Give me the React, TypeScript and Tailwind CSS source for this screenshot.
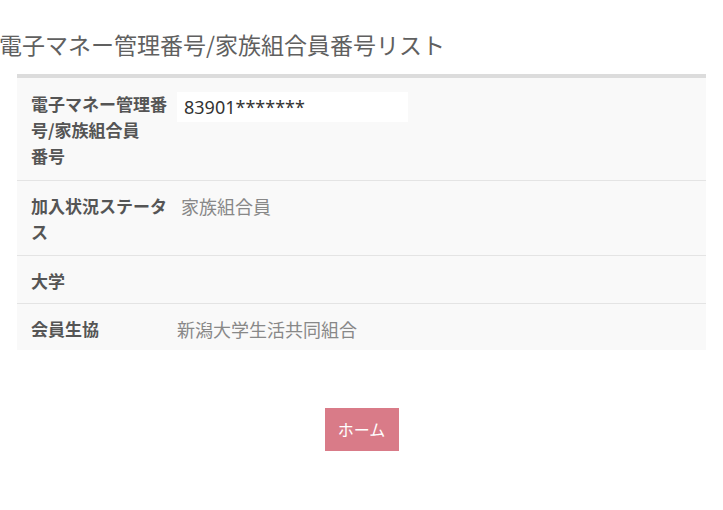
import React from "react";

const font = { fontFamily: '"Noto Sans CJK JP", "Noto Sans", sans-serif' };

export default function App() {
  return (
    <div className="min-h-[510px] w-full bg-white" style={font}>
      <div className="pt-[28px]">
        <h1 className="text-[23px] leading-[32px] font-normal text-[#606060] ml-[-1px] whitespace-nowrap">
          電子マネー管理番号/家族組合員番号リスト
        </h1>
      </div>
      <div className="mx-[17px] mt-[14px] border-t-4 border-[#dcdcdc] bg-[#f9f9f9]">
        <div className="grid grid-cols-[160px_1fr]">
          <div className="pl-[14px] pr-[8px] pt-[13px] pb-[11px] text-[17px] leading-[26px] font-bold text-[#555]">
            電子マネー管理番
            <br />
            号/家族組合員
            <br />
            番号
          </div>
          <div className="pt-[14px]">
            <div
              className="w-[231px] h-[30px] bg-white pl-[7px] text-[18px] leading-[30px] text-[#333]"
              style={{ fontFamily: '"Noto Sans", "Noto Sans CJK JP", sans-serif' }}
            >
              83901*******
            </div>
          </div>
        </div>
        <div className="grid grid-cols-[160px_1fr] border-t border-[#e4e4e4]">
          <div className="pl-[14px] pr-[8px] pt-[12px] pb-[10px] text-[17px] leading-[26px] font-bold text-[#555]">
            加入状況ステータ
            <br />ス
          </div>
          <div className="pl-[4px] pt-[12px] text-[18px] leading-[26px] text-[#888]">家族組合員</div>
        </div>
        <div className="grid grid-cols-[160px_1fr] border-t border-[#e4e4e4]">
          <div className="pl-[14px] pr-[8px] pt-[12px] pb-[9px] text-[17px] leading-[26px] font-bold text-[#555]">
            大学
          </div>
          <div className="pt-[12px] text-[18px] leading-[26px] text-[#888]"></div>
        </div>
        <div className="grid grid-cols-[160px_1fr] border-t border-[#e4e4e4]">
          <div className="pl-[14px] pr-[8px] pt-[12px] pb-[8px] text-[17px] leading-[26px] font-bold text-[#555]">
            会員生協
          </div>
          <div className="pt-[12px] text-[18px] leading-[26px] text-[#888]">新潟大学生活共同組合</div>
        </div>
      </div>
      <div className="flex justify-center mt-[58px]">
        <button className="w-[74px] h-[43px] bg-[#d97b88] text-white text-[16px] leading-[43px]">
          ホーム
        </button>
      </div>
    </div>
  );
}
